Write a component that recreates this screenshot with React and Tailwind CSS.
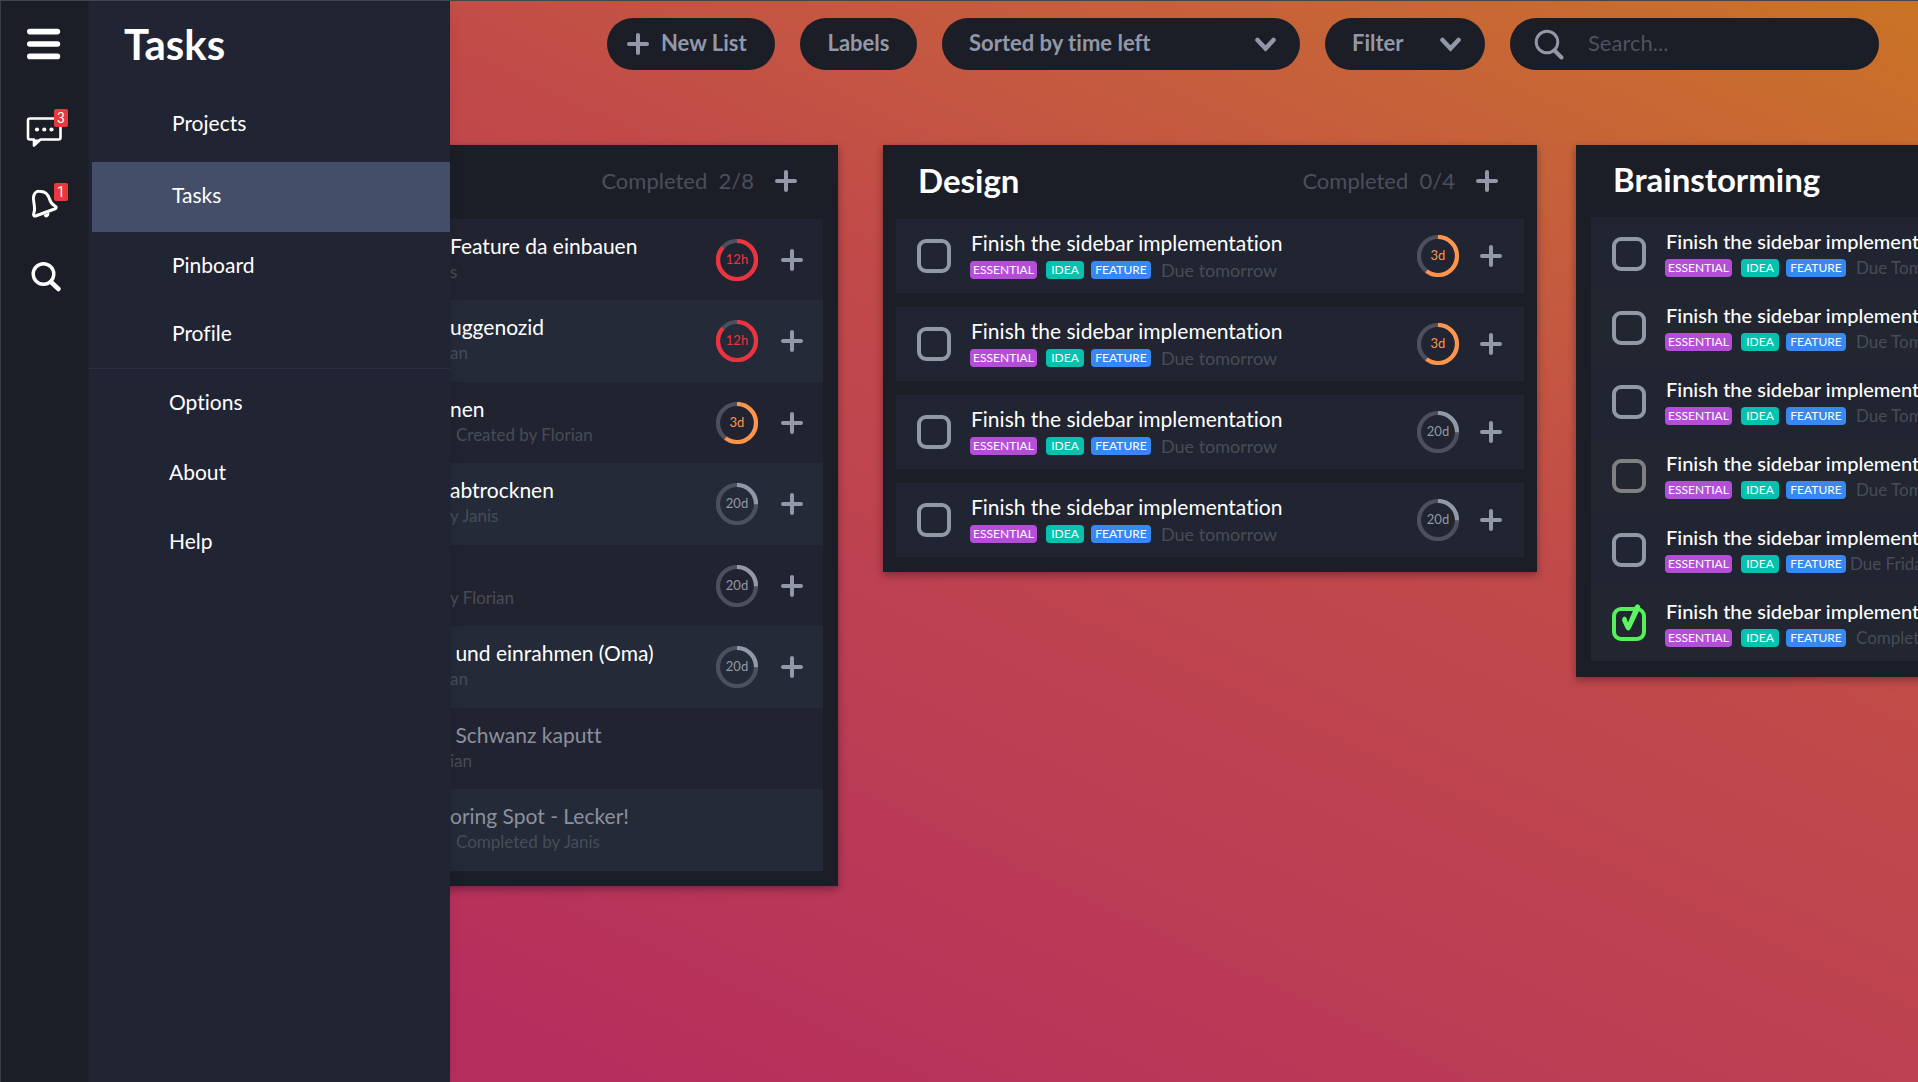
import React from "react";

const PlusIcon = () => (
  <svg width="22" height="22" viewBox="0 0 22 22" fill="none" stroke="#9298a8" strokeWidth="4" strokeLinecap="round" aria-hidden="true">
    <path d="M11 2v18M2 11h18" />
  </svg>
);

const Chevron = () => (
  <svg className="pointer-events-none absolute right-6 top-[19px]" width="21" height="16" viewBox="0 0 21 16" fill="none" stroke="#9298a8" strokeWidth="4.5" strokeLinecap="round" aria-hidden="true">
    <path d="M2.5 3l8 8.5 8-8.5" />
  </svg>
);

const Badge = ({ children }) => (
  <span className="absolute top-[5px] right-0 flex h-[18px] w-[14px] items-center justify-center rounded-xs bg-[#ea383b] font-['Roboto',sans-serif] text-sm text-white">
    {children}
  </span>
);

const RailButton = ({ label, children }) => (
  <button aria-label={label} className="relative size-12">
    {children}
  </button>
);

function Rail() {
  return (
    <div className="flex w-[88px] flex-col items-start gap-[26px] border-r border-[#1e212d] bg-[#1b1e27] pt-[19px] pl-[19px]">
      <div className="mb-[10px] h-12">
        <RailButton label="Menu">
          <svg width="48" height="48" viewBox="0 0 48 48" stroke="#fff" strokeWidth="5.6" strokeLinecap="round">
            <path d="M9.8 11.6h27.6M9.8 24h27.6M9.8 36.4h27.6" />
          </svg>
        </RailButton>
      </div>
      <RailButton label="Messages">
        <svg width="48" height="48" viewBox="0 0 48 48" fill="none" stroke="#fff" strokeWidth="2.6" strokeLinejoin="round">
          <path d="M10 14.5h28.500q2 0 2 2v17q0 2-2 2H20.500L14 41.500v-6h-4q-2 0-2-2v-17q0-2 2-2z" />
          <path d="M14.500 35.500v6l5.500-6z" fill="#fff" stroke="none" />
          <g fill="#fff" stroke="none">
            <circle cx="17" cy="25.500" r="2.100" />
            <circle cx="24.300" cy="25.500" r="2.100" />
            <circle cx="31.500" cy="25.500" r="2.100" />
          </g>
        </svg>
        <Badge>3</Badge>
      </RailButton>
      <RailButton label="Notifications">
        <svg width="48" height="48" viewBox="0 0 48 48" fill="none" stroke="#fff" strokeWidth="3" strokeLinejoin="round" strokeLinecap="round">
          <path d="M17 13.500C13.500 15.500 12.800 19 13.800 24c.8 4.500 1.200 8 .2 10.500-.8 2-.5 4 1.500 3.500L34.500 31c2.500-1 2-2 .5-3-3-1.500-4.500-3.500-5.500-7-1.500-4.500-4.500-7.500-8.500-7.500-2 0-3-.5-4 0z" />
          <path d="M24.500 37.500c1 2 4 1.500 4.200-1.800z" fill="#fff" strokeWidth="1.500" />
        </svg>
        <Badge>1</Badge>
      </RailButton>
      <RailButton label="Search">
        <svg width="48" height="48" viewBox="0 0 48 48" fill="none" stroke="#fff">
          <circle cx="23.500" cy="22" r="10.300" strokeWidth="3.400" />
          <path d="M31 30l7.500 7" strokeWidth="4.600" strokeLinecap="round" />
        </svg>
      </RailButton>
    </div>
  );
}

const navLink = "flex items-center pb-1 pl-20 text-white";

function Sidebar() {
  return (
    <aside className="relative z-10 flex w-[450px] shrink-0 border-l border-[#3a3e48] bg-[#212432] shadow-lg">
      <Rail />
      <nav className="flex-1 text-[21px]">
        <h1 className="flex h-[86px] items-center pl-[35px] text-[42px] font-bold text-white">Tasks</h1>
        <div className="pl-[3px]">
          <a href="#projects" className={`${navLink} h-[75px]`}>Projects</a>
          <a href="#tasks" className={`${navLink} h-[70px] bg-[#454e68]`}>Tasks</a>
          <a href="#pinboard" className={`${navLink} h-[70px]`}>Pinboard</a>
          <a href="#profile" className={`${navLink} h-[66px]`}>Profile</a>
        </div>
        <div className="border-t border-[#2c3040]">
          <a href="#options" className={`${navLink} h-[70px]`}>Options</a>
          <a href="#about" className={`${navLink} h-[69px]`}>About</a>
          <a href="#help" className={`${navLink} h-[70px]`}>Help</a>
        </div>
      </nav>
    </aside>
  );
}

const pill = "h-[52px] shrink-0 rounded-full bg-[#1b1e27] text-[22px] font-bold text-[#9298a8]";

function Toolbar() {
  return (
    <div className="flex gap-[25px] pt-[17px] pr-[39px] pl-[157px]">
      <button className={`${pill} flex w-[168px] items-center gap-3 pl-5`}>
        <PlusIcon />
        <span className="pb-[3px]">New List</span>
      </button>
      <button className={`${pill} w-[117px] pb-[3px]`}>Labels</button>
      <div className="relative w-[358px] shrink-0">
        <select aria-label="Sort order" className={`${pill} w-full appearance-none pb-[3px] pl-[27px]`}>
          <option>Sorted by time left</option>
        </select>
        <Chevron />
      </div>
      <div className="relative w-[160px] shrink-0">
        <select aria-label="Filter" className={`${pill} w-full appearance-none pb-[3px] pl-[27px]`}>
          <option>Filter</option>
        </select>
        <Chevron />
      </div>
      <label className={`${pill} flex min-w-0 flex-1 items-center gap-6 pl-6`}>
        <svg className="shrink-0" width="30" height="34" viewBox="0 0 30 34" fill="none" stroke="#9298a8" aria-hidden="true">
          <circle cx="13" cy="15" r="10.800" strokeWidth="3" />
          <path d="M20.500 23.500l7 7" strokeWidth="4" strokeLinecap="round" />
        </svg>
        <input type="text" aria-label="Search" placeholder="Search..." className="min-w-0 flex-1 bg-transparent pb-[3px] text-[22px] font-normal outline-none placeholder:text-[#4e525e]" />
      </label>
    </div>
  );
}

const timers = {
  "12h": { color: "#f0323f", share: 0.86 },
  "3d": { color: "#ff944a", share: 0.6 },
  "20d": { color: "#9298a8", share: 0.25 },
};

function Timer({ left }) {
  const { color, share } = timers[left];
  const length = 2 * Math.PI * 19;
  return (
    <div className="relative size-[42px] shrink-0">
      <svg width="42" height="42" viewBox="0 0 42 42" fill="none" strokeWidth="4.200" aria-hidden="true">
        <circle cx="21" cy="21" r="19" stroke="#4c505c" />
        <circle cx="21" cy="21" r="19" stroke={color} strokeDasharray={`${length * share} ${length}`} transform="rotate(-90 21 21)" />
      </svg>
      <span className="absolute inset-0 flex items-center justify-center text-[13px]" style={{ color }}>{left}</span>
    </div>
  );
}

const AddButton = ({ label }) => (
  <button aria-label={label} className="flex size-[22px] shrink-0">
    <PlusIcon />
  </button>
);

function Tags() {
  const tag = "flex h-[18px] items-center justify-center rounded text-xs text-white";
  return (
    <>
      <span className={`${tag} mr-[9px] w-[67px] bg-[#b34fd7]`}>ESSENTIAL</span>
      <span className={`${tag} mr-[7px] w-[38px] bg-[#05c2b0]`}>IDEA</span>
      <span className={`${tag} w-[60px] bg-[#3788f0]`}>FEATURE</span>
    </>
  );
}

const tones = {
  plain: "border-[#9298a8]",
  muted: "border-[#808080]",
  done: "border-[#55ef58]",
};

function Tick({ tone = "plain" }) {
  return (
    <div className="relative size-[34px] shrink-0">
      <input type="checkbox" aria-label="Finish the sidebar implementation" defaultChecked={tone === "done"} className={`block size-[34px] appearance-none rounded-[9px] border-4 ${tones[tone]}`} />
      {tone === "done" && (
        <svg className="pointer-events-none absolute -top-1 left-0" width="34" height="38" viewBox="0 0 34 38" aria-hidden="true">
          <path d="M10.500 15q2-3 4 0l1.500 4.500L23 3q2.500-3.500 5 0 .5 1.500-.3 3.500L19 25q-3 5-5.500 0L10 17.500z" fill="#5cf760" />
        </svg>
      )}
    </div>
  );
}

function Task({ due, timer, tone, titleStyle, dueStyle }) {
  return (
    <>
      <Tick tone={tone} />
      <div className="ml-[19px] flex-1 pb-[3px]">
        <div className={`mb-[3px] pl-px leading-7 whitespace-nowrap text-white ${titleStyle}`}>Finish the sidebar implementation</div>
        <div className="flex h-5 items-center whitespace-nowrap">
          <Tags />
          <span className={`text-[#484c58] ${dueStyle}`}>{due}</span>
        </div>
      </div>
      {timer && (
        <div className="flex items-center gap-[21px]">
          <Timer left={timer} />
          <AddButton label="Add subtask" />
        </div>
      )}
    </>
  );
}

function ListHeader({ title, count, height = "h-[74px]" }) {
  return (
    <header className={`flex items-center pr-[26px] pb-[3px] pl-[22px] ${height}`}>
      <h2 className="flex-1 text-[33px] font-bold text-white">{title}</h2>
      {count && (
        <>
          <span className="mr-[21px] text-[22px] whitespace-pre text-[#4b4f5b]">{`Completed  ${count}`}</span>
          <AddButton label="Add task" />
        </>
      )}
    </header>
  );
}

const card = "w-[654px] shrink-0 bg-[#1b1e27] shadow-[0_3px_8px_rgba(20,10,30,0.4)]";

const coveredTasks = [
  { title: "Feature da einbauen", note: "s", timer: "12h" },
  { title: "uggenozid", note: "an", timer: "12h" },
  { title: "nen", note: "Created by Florian", tagged: true, timer: "3d" },
  { title: "abtrocknen", note: "y Janis", timer: "20d" },
  { note: "y Florian", timer: "20d" },
  { title: " und einrahmen (Oma)", note: "an", timer: "20d" },
  { title: " Schwanz kaputt", note: "ian", done: true },
  { title: "oring Spot - Lecker!", note: "Completed by Janis", tagged: true, done: true },
];

function CoveredList() {
  return (
    <section className={`${card} -ml-[266px] px-[15px] pb-[15px]`}>
      <ListHeader count="2/8" title="" />
      <ul>
        {coveredTasks.map((t, i) => (
          <li key={i} className="flex h-[81px] items-center bg-[#212430] pr-5 pl-[251px] even:h-[82px] even:bg-[#242a37]">
            <div className="flex-1 pb-1">
              <div className={`h-7 text-[21px] leading-7 whitespace-pre ${t.done ? "text-[#8b909e]" : "text-white"}`}>{t.title}</div>
              <div className={`text-[17px] leading-6 text-[#484c58] ${t.tagged ? "pl-1.5" : ""}`}>{t.note}</div>
            </div>
            {t.timer && (
              <div className="flex items-center gap-[23px]">
                <Timer left={t.timer} />
                <AddButton label="Add subtask" />
              </div>
            )}
          </li>
        ))}
      </ul>
    </section>
  );
}

function DesignList() {
  return (
    <section className={`${card} px-[13px] pb-[15px]`}>
      <ListHeader title="Design" count="0/4" />
      <ul className="flex flex-col gap-[14px]">
        {["3d", "3d", "20d", "20d"].map((timer, i) => (
          <li key={i} className="flex h-[74px] items-center bg-[#212431] pr-[22px] pl-[21px]">
            <Task due="Due tomorrow" timer={timer} titleStyle="text-[21px]" dueStyle="ml-[10px] text-lg" />
          </li>
        ))}
      </ul>
    </section>
  );
}

const ideas = [
  { due: "Due Tomorrow" },
  { due: "Due Tomorrow" },
  { due: "Due Tomorrow" },
  { due: "Due Tomorrow", tone: "muted" },
  { due: "Due Friday", dueStyle: "ml-1 text-[17px]" },
  { due: "Completed", tone: "done" },
];

function BrainstormingList() {
  return (
    <section className={`${card} -ml-[6px] px-[15px] pb-4`}>
      <ListHeader title="Brainstorming" height="h-[72px]" />
      <ul>
        {ideas.map((t, i) => (
          <li key={i} className="flex h-[74px] items-center bg-[#212431] pl-[21px] even:bg-[#212631]">
            <Task due={t.due} tone={t.tone} titleStyle="text-xl font-medium" dueStyle={t.dueStyle ?? "ml-[10px] text-[17px]"} />
          </li>
        ))}
      </ul>
    </section>
  );
}

export default function App() {
  return (
    <div className="flex min-h-screen border-t border-[#43464f] bg-[#212432] font-['Lato',sans-serif] [font-variant-ligatures:none]">
      <Sidebar />
      <main className="min-w-0 flex-1 overflow-hidden bg-linear-205 from-[#ca7324] via-[#c14a49] via-42% to-[#b62e5d] to-95%">
        <Toolbar />
        <div className="flex items-start gap-[45px] pt-[75px] pb-10">
          <CoveredList />
          <DesignList />
          <BrainstormingList />
        </div>
      </main>
    </div>
  );
}
